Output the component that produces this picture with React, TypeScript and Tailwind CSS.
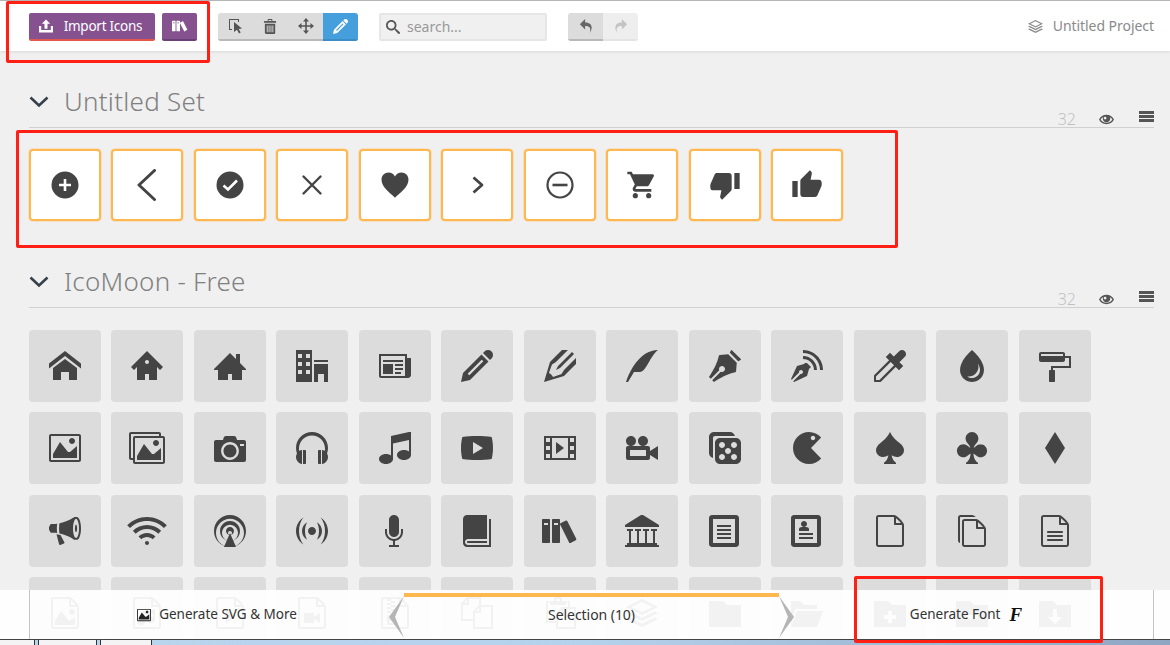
import React from "react";
import {
  ImBin, ImBlog, ImBook, ImBooks, ImBullhorn, ImCamera, ImClubs, ImConnection, ImCopy, ImDiamonds,
  ImDice, ImDroplet, ImEye, ImEyedropper, ImFileEmpty, ImFileMusic, ImFilePicture, ImFilePlay, ImFileText,
  ImFileText2, ImFileVideo, ImFileZip, ImFilesEmpty, ImFilm, ImFolder, ImFolderDownload, ImFolderMinus,
  ImFolderOpen, ImFolderPlus, ImHeadphones, ImHome, ImHome2, ImHome3, ImImage, ImImages, ImLibrary, ImMic,
  ImMusic, ImNewspaper, ImOffice, ImPacman, ImPaintFormat, ImPaste, ImPen, ImPencil, ImPencil2, ImPlay,
  ImPodcast, ImProfile, ImQuill, ImFeed, ImRedo2, ImSearch, ImSpades, ImStack, ImUndo2, ImVideoCamera,
} from "react-icons/im";
import { MdShoppingCart, MdThumbDown, MdThumbUp } from "react-icons/md";

const freeIcons = [
  ImHome, ImHome2, ImHome3, ImOffice, ImNewspaper, ImPencil, ImPencil2, ImQuill, ImPen, ImBlog, ImEyedropper, ImDroplet, ImPaintFormat,
  ImImage, ImImages, ImCamera, ImHeadphones, ImMusic, ImPlay, ImFilm, ImVideoCamera, ImDice, ImPacman, ImSpades, ImClubs, ImDiamonds,
  ImBullhorn, ImConnection, ImPodcast, ImFeed, ImMic, ImBook, ImBooks, ImLibrary, ImFileText, ImProfile, ImFileEmpty, ImFilesEmpty, ImFileText2,
  ImFilePicture, ImFileMusic, ImFilePlay, ImFileVideo, ImFileZip, ImCopy, ImPaste, ImStack, ImFolder, ImFolderOpen, ImFolderPlus, ImFolderMinus, ImFolderDownload,
];

// these ones are wider than the 32px square
const wideIcons = new Map<unknown, number>([
  [ImConnection, 40],
  [ImImages, 36],
  [ImBooks, 36],
  [ImLibrary, 34],
]);

const Glyph = ({ children }: { children: React.ReactNode }) => (
  <svg viewBox="0 0 32 32" className="h-8 w-8" fill="none" stroke="#444" strokeWidth="2.4" strokeLinecap="round" strokeLinejoin="round">
    {children}
  </svg>
);

const selectedIcons = [
  <Glyph>
    <circle cx="16" cy="16" r="13.5" fill="#444" stroke="none" />
    <path d="M16 10v12M10 16h12" stroke="#fff" strokeWidth="2.6" strokeLinecap="butt" />
  </Glyph>,
  <Glyph>
    <path d="M23.5 1.5 8 16l15.5 14.5" strokeWidth="3" />
  </Glyph>,
  <Glyph>
    <circle cx="16" cy="16" r="13.5" fill="#444" stroke="none" />
    <path d="m9.5 16.5 4.5 4 9-9" stroke="#fff" strokeWidth="2.6" strokeLinecap="butt" strokeLinejoin="miter" />
  </Glyph>,
  <Glyph>
    <path d="m7.500 7.500 17 17M24.500 7.500l-17 17" strokeWidth="2.400" />
  </Glyph>,
  <Glyph>
    <path
      d="M16 28.700C12 24.500 2.500 18.500 2.500 10.800 2.500 6.500 5.700 3.500 9.500 3.500c2.800 0 5.200 1.500 6.500 4 1.300-2.500 3.700-4 6.500-4 3.800 0 7 3 7 7.300 0 7.700-9.500 13.700-13.500 17.900Z"
      fill="#444"
      stroke="none"
    />
  </Glyph>,
  <Glyph>
    <path d="m12.500 8.500 8.500 7.500-8.500 7.500" strokeWidth="2.800" strokeLinecap="butt" />
  </Glyph>,
  <Glyph>
    <circle cx="16" cy="16" r="12.500" strokeWidth="2.200" />
    <path d="M8.500 16h15" strokeWidth="2.600" strokeLinecap="butt" />
  </Glyph>,
  <MdShoppingCart size={32} color="#444" />,
  <MdThumbDown size={32} color="#444" />,
  <MdThumbUp size={32} color="#444" />,
];

const ImportIcon = () => (
  <svg viewBox="0 0 16 16" className="h-4 w-4" fill="#fff">
    <path d="M8 1.500 3.800 5.700h2.700v5h3v-5h2.700Z" />
    <path d="M1 8h2.200v4h9.600V8H15v6.500H1Z" />
  </svg>
);

const SelectTool = () => (
  <svg viewBox="0 0 16 16" className="h-4 w-4" fill="#555">
    <path d="M1 1h10v3h-1V2H2v9h2v1H1Z" />
    <path d="m6 4 8 6.500-3.300.4 2 3.700-1.700.9-2-3.800L6 14Z" />
  </svg>
);

const MoveTool = () => (
  <svg viewBox="0 0 16 16" className="h-4 w-4" fill="none" stroke="#555" strokeWidth="1.600">
    <path d="M8 2v12M2 8h12" />
    <path d="M8 0 5 3.500h6ZM8 16l-3-3.500h6ZM0 8l3.500-3v6ZM16 8l-3.500-3v6Z" fill="#555" stroke="none" />
  </svg>
);

const Section = ({ title, gridClass, children }: { title: string; gridClass: string; children: React.ReactNode }) => (
  <section>
    <div className="flex h-[43px] items-end justify-between border-b border-[#d0d0d0] pb-[1px]">
      <div className="flex items-center self-start pt-[1px]">
        <svg viewBox="0 0 20 12" className="mt-[2px] mr-[15px] h-3 w-5" fill="none" stroke="#36404a" strokeWidth="2.600">
          <path d="m1.500 1.500 8.500 8 8.500-8" />
        </svg>
        <h2 className="text-[26px] leading-[30px] font-light tracking-[0.25px] text-[#808080]">{title}</h2>
      </div>
      <div className="relative top-[3px] flex items-center text-[#555]">
        <span className="mr-[23px] text-[16px] leading-5 font-light text-[#c0c0c0]">32</span>
        <ImEye size={15} className="mr-[25px]" />
        <div className="mb-[5px] flex w-[15px] flex-col gap-[1px]">
          <span className="h-[3px] bg-[#555]" />
          <span className="h-[3px] bg-[#555]" />
          <span className="h-[3px] bg-[#555]" />
        </div>
      </div>
    </div>
    <div className={`grid grid-cols-[repeat(13,72px)] gap-[10.49px] ${gridClass}`}>{children}</div>
  </section>
);

const Header = () => (
  <header className="flex h-[51px] shrink-0 items-start border-t border-[#b5b5b5] bg-white pt-[12px] pr-[16px] pl-[29px] shadow-[0_1px_3px_rgba(0,0,0,0.1)]">
    <button className="flex h-[28px] w-[126px] items-center justify-center gap-[10px] rounded-[2px] border-b-2 border-[#e2574c] bg-[#85528f] pr-[4px] text-[13.5px] tracking-[-0.25px] text-white">
      <ImportIcon />
      Import Icons
    </button>
    <button className="ml-[7px] flex h-[28px] w-[35px] items-center justify-center rounded-[2px] border-b-2 border-[#6b4076] bg-[#85528f] text-white">
      <ImBooks size={16} />
    </button>

    <div className="ml-[21px] flex h-[28px] overflow-hidden rounded-[3px] text-[#555]">
      <span className="flex w-[35px] items-center justify-center border-b-2 border-[#b9b9b9] bg-[#dcdcdc]"><SelectTool /></span>
      <span className="flex w-[35px] items-center justify-center border-b-2 border-[#b9b9b9] bg-[#dcdcdc]"><ImBin size={15} /></span>
      <span className="flex w-[35px] items-center justify-center border-b-2 border-[#b9b9b9] bg-[#dcdcdc]"><MoveTool /></span>
      <span className="flex w-[35px] items-center justify-center border-b-2 border-[#3d8cc4] bg-[#459fdd] text-white"><ImPencil size={15} /></span>
    </div>

    <div className="ml-[21px] flex h-[28px] w-[168px] items-center gap-[7px] rounded-[2px] border-2 border-[#e6e6e6] bg-[#f0f0f0] pb-[2px] pl-[5px] text-[14px] text-[#999]">
      <ImSearch size={14} className="mt-[2px] text-[#555]" />
      search...
    </div>

    <div className="ml-[21px] flex h-[28px] overflow-hidden rounded-[3px]">
      <span className="flex w-[35px] items-center justify-center border-b-2 border-[#b9b9b9] bg-[#dcdcdc] text-[#666]"><ImUndo2 size={14} /></span>
      <span className="flex w-[35px] items-center justify-center border-b-2 border-[#e4e4e4] bg-[#eeeeee] text-[#c4c4c4]"><ImRedo2 size={14} /></span>
    </div>

    <div className="ml-auto flex h-[28px] items-center gap-[10px] pb-[3px] text-[14px] tracking-[-0.05px] text-[#8a8a8a]">
      <ImStack size={15} className="mt-[2px]" />
      Untitled Project
    </div>
  </header>
);

const BottomBar = () => (
  <div className="absolute right-0 bottom-[6px] left-0 flex h-[49px] bg-white/[0.93] text-[#333]">
    <button className="ml-[29px] flex w-[375px] items-center justify-center gap-[8px] border-l border-[#c4c4c4] pb-[1px] text-[13.5px]">
      <ImImage size={14} className="mt-[1px] text-[#222]" />
      Generate SVG &amp; More
    </button>
    <div className="relative mt-[3px] flex w-[375px] items-center justify-center border-t-4 border-[#ffb84f] pb-[7px] text-[14px] tracking-[-0.05px]">
      Selection (10)
      <svg viewBox="0 0 15 42" className="absolute top-[-1px] left-[-15px] h-[42px] w-[15px]" fill="#b5b5b5">
        <path d="M15 0 0 21l15 21-9-21Z" />
      </svg>
      <svg viewBox="0 0 15 42" className="absolute top-[-1px] right-[-15px] h-[42px] w-[15px]" fill="#b5b5b5">
        <path d="m0 0 15 21L0 42l9-21Z" />
      </svg>
    </div>
    <button className="mr-[16px] flex flex-1 items-center justify-center gap-[9px] border-r border-[#c4c4c4] pb-[1px] text-[13.5px]">
      Generate Font
      <span className="font-['Liberation_Serif',serif] text-[19px] leading-none font-bold text-[#111] italic">F</span>
    </button>
  </div>
);

const Taskbar = () => (
  <div className="flex h-[6px] shrink-0 border-t border-[#444] bg-gradient-to-r from-[#b9d5ee] via-[#b5d2ec] to-[#8ea6c2]">
    <span className="w-[35px] border-r border-[#333] bg-[#f4f4f4]" />
    <span className="ml-[3px] w-[59px] border-x border-[#333] bg-[#f4f4f4]" />
    <span className="ml-[3px] w-[52px] border-x border-[#333] bg-[#f4f4f4]" />
  </div>
);

export default function App() {
  return (
    <div className="relative flex h-[645px] flex-col overflow-hidden bg-[#f0f0f0] font-['Noto_Sans',sans-serif]">
      <Header />

      <main className="min-h-0 flex-1 overflow-hidden pt-[34px] pr-[16px] pl-[29px]">
        <Section title="Untitled Set" gridClass="mt-[21px] mb-[44px]">
          {selectedIcons.map((icon, i) => (
            <div
              key={i}
              className="flex h-[72px] items-center justify-center rounded-[4px] border-2 border-[#ffb84f] bg-white shadow-[0_0_0_1px_rgba(255,184,79,0.25)]"
            >
              {icon}
            </div>
          ))}
        </Section>
        <Section title="IcoMoon - Free" gridClass="mt-[22px]">
          {freeIcons.map((Icon, i) => (
            <div key={i} className="flex h-[72px] items-center justify-center rounded-[4px] bg-[#dcdcdc] text-[#444]">
              <Icon size={wideIcons.get(Icon) ?? 32} />
            </div>
          ))}
        </Section>
      </main>

      <BottomBar />
      <Taskbar />

      {/* red annotation boxes */}
      <div className="absolute top-[1px] left-[6px] h-[62px] w-[204px] rounded-[2px] border-[3px] border-[#ff1f14]" />
      <div className="absolute top-[130px] left-[16px] h-[118px] w-[882px] rounded-[2px] border-[3px] border-[#ff1f14]" />
      <div className="absolute top-[576px] left-[854px] h-[67px] w-[249px] rounded-[2px] border-[3px] border-[#ff1f14]" />
    </div>
  );
}
